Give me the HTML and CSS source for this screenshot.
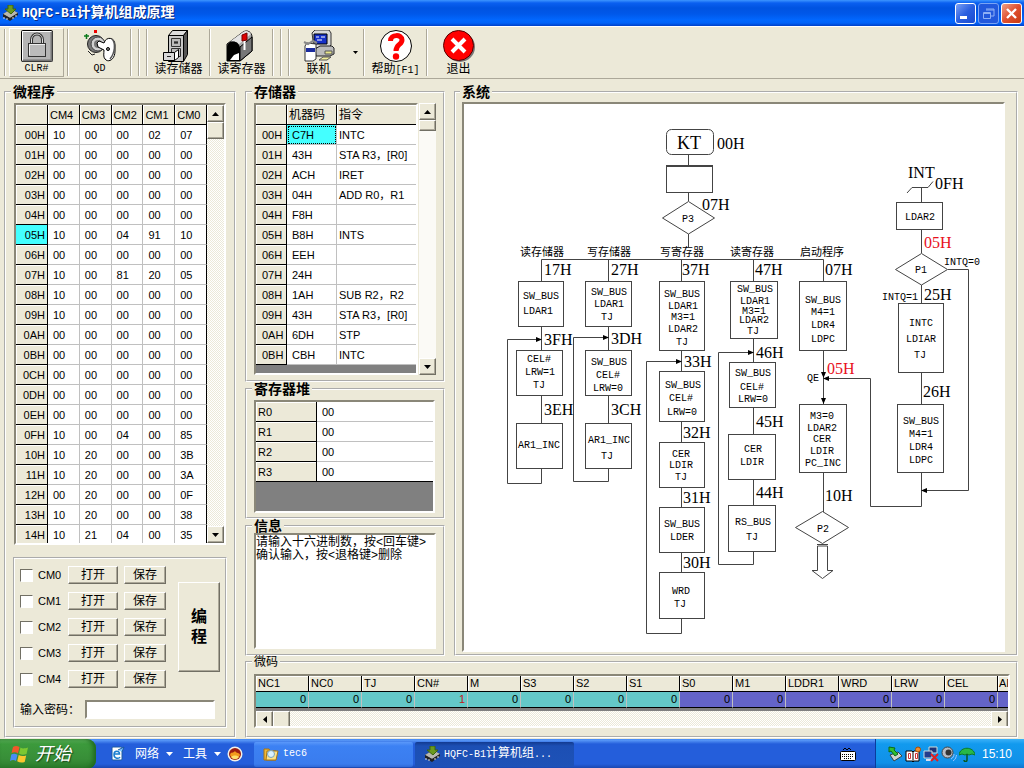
FILE: index.html
```html
<!DOCTYPE html>
<html lang="zh-CN">
<head>
    <meta charset="UTF-8">
    <meta name="viewport" content="width=device-width, initial-scale=1.0">
    <title>HQFC-B1计算机组成原理</title>
    <link rel="stylesheet" href="styles.css">
</head>
<body>
    <svg class="sprite" width="0" height="0">
        <symbol id="chip" viewBox="0 0 16 16">
            <path d="M1 9l8-5 7 4-8 6z" fill="#333"/>
            <path d="M1 9l8-5 7 4-8 5z" fill="#b8b8b0"/>
            <path d="M1 9v3l7 4 8-6V8l-8 5z" fill="#222"/>
            <path d="M2 12v2M5 13v2M11 12v2M14 10v2" stroke="#ddd"/>
            <path d="M6 0h5v4h3l-5 5-6-5h3z" fill="#6b9a1e" stroke="#3d6410"/>
        </symbol>
    </svg>

    <header class="titlebar">
        <svg class="app-icon" width="16" height="16"><use href="#chip"/></svg>
        <h1><span class="latin">HQFC-B1</span>计算机组成原理</h1>
        <div class="window-buttons">
            <button type="button" class="win-btn" aria-label="最小化">
                <svg width="19" height="19"><path d="M4 12h7v3H4z" fill="#fff"/></svg>
            </button>
            <button type="button" class="win-btn disabled" aria-label="还原">
                <svg width="19" height="19"><path d="M7 5h8v7h-3M7 6h8M4.5 8.5h7v6h-7zM4 9.5h8" fill="none" stroke="#8fb0f5"/></svg>
            </button>
            <button type="button" class="win-btn close" aria-label="关闭">
                <svg width="19" height="19"><path d="M5 5l9 9M14 5l-9 9" stroke="#fff" stroke-width="2.4"/></svg>
            </button>
        </div>
    </header>

    <div class="toolbar">
        <i class="sep"></i>
        <button type="button" class="tool raised">
            <svg width="32" height="32">
                <rect x=".5" y=".5" width="31" height="31" rx="1" fill="#b5b5b5" stroke="#000"/>
                <path d="M1.5 30V1.5H30" fill="none" stroke="#fff"/>
                <path d="M2 30.5h28.5V2" fill="none" stroke="#777" stroke-width="2"/>
                <path d="M10.5 14V10c0-8 11-8 11 0v4" fill="none" stroke="#333" stroke-width="3"/>
                <path d="M10.5 14V10c0-8 11-8 11 0v4" fill="none" stroke="#ddd"/>
                <rect x="7.5" y="13.5" width="17" height="13" fill="#bbb" stroke="#333"/>
                <path d="M8.5 25V14.5H24" fill="none" stroke="#eee"/>
            </svg>
            <span class="mono">CLR#</span>
        </button>
        <i class="sep"></i>
        <button type="button" class="tool">
            <svg width="32" height="32">
                <path d="M0 6h5M2.5 4v5" stroke="#0a7a1a" stroke-width="1.5"/>
                <path d="M10 0h3v3h-3z" fill="#e00"/>
                <circle cx="12" cy="14" r="8.5" fill="#777" stroke="#222"/>
                <circle cx="14" cy="14" r="7" fill="#d0d0d0" stroke="#444"/>
                <circle cx="14" cy="14" r="4" fill="#777"/>
                <path d="M13 13l2-2 5 2c2-7 11-6 11 2v6c0 9-7 12-10 8-2-2-1-6-1-9l-6-3z" fill="#fff" stroke="#000"/>
                <path d="M28 9c4 4 3 14-2 20" fill="none" stroke="#555" stroke-width="1.5"/>
                <circle cx="24" cy="19" r="1.5" fill="#888" stroke="#000"/>
                <path d="M4 21l4 4 3-1" fill="none" stroke="#222"/>
            </svg>
            <span class="mono">QD</span>
        </button>
        <i class="sep"></i><i class="sep"></i><i class="sep"></i>
        <button type="button" class="tool">
            <svg width="32" height="32">
                <path d="M5.5 5.500l4-5h15l-4 5z" fill="#ddd" stroke="#000"/>
                <path d="M20.5 5.500l4-5v24l-4 7z" fill="#555" stroke="#000"/>
                <path d="M5.5 5.500h15v26h-15z" fill="#c8c8c8" stroke="#000"/>
                <path d="M8.500 8.500h9v8h-9zM8.500 18.500h9v8h-9z" fill="#bbb" stroke="#333"/>
                <path d="M11 12h4M11 13h4" stroke="#000"/>
                <path d="M.5 22.500h11v8h-11z" fill="#d8d8d8" stroke="#000"/>
                <path d="M11.500 22.500l4-3v8l-4 3z" fill="#fff" stroke="#000"/>
                <path d="M4 26h4v1H4z" fill="#222"/>
            </svg>
            <span>读存储器</span>
        </button>
        <i class="sep"></i>
        <button type="button" class="tool">
            <svg width="32" height="32">
                <path d="M1 14L17 2c5-3 9 1 9 5v14L14 31H1z" fill="#aaa" stroke="#000"/>
                <path d="M2 13L17 2c3-2 6-1 8 2L12 15c-2-5-7-5-10-2z" fill="#e4e4e4"/>
                <path d="M1 31V17c0-7 12-8 13 1v13z" fill="#000"/>
                <path d="M4 30l4-5 5-2v7z" fill="#fff"/>
                <path d="M14 31V17L26 7v14z" fill="#777" stroke="#000"/>
                <path d="M18.5 20V4" stroke="#fff" stroke-width="2"/>
                <path d="M16 5l5-2v7l-5 1z" fill="#d00" stroke="#700"/>
            </svg>
            <span>读寄存器</span>
        </button>
        <i class="sep"></i><i class="sep"></i><i class="sep"></i>
        <button type="button" class="tool linked">
            <svg width="32" height="32">
                <path d="M9 3l3-3h14l2 3v12l-3 3H11z" fill="#d8d8d8" stroke="#333"/>
                <path d="M11 4h13v10H11z" fill="#1630c8" stroke="#000"/>
                <path d="M13 7h3M18 7h4M14 10h5" stroke="#fff"/>
                <path d="M12 19l5-3h12l2 2v6l-4 2H13z" fill="#bbb" stroke="#222"/>
                <path d="M22 21h7v3h-7z" fill="#e9e68a" stroke="#555"/>
                <path d="M2 16l2-3 9 1v15l-3 2H2z" fill="#fff" stroke="#333"/>
                <path d="M3 18h9v4H3z" fill="#1b2c9e"/>
                <path d="M1 12l4 2 5-3 4 2" fill="none" stroke="#888" stroke-width="2"/>
                <path d="M16 30l4-3h8l-4 3z" fill="#f3ef9a" stroke="#555"/>
            </svg>
            <span>联机</span>
        </button>
        <button type="button" class="drop" aria-label="联机选项"><svg width="5" height="3"><path d="M0 0h5L2.5 3z"/></svg></button>
        <i class="sep"></i>
        <button type="button" class="tool">
            <svg width="32" height="32">
                <circle cx="16" cy="16" r="15.5" fill="#fff" stroke="#000"/>
                <path d="M10.5 11c0-7 11.5-7 11.5-1 0 5-6 4-6 11" fill="none" stroke="#f00" stroke-width="5"/>
                <circle cx="16" cy="26.5" r="3.2" fill="#f00"/>
            </svg>
            <span>帮助<span class="mono">[F1]</span></span>
        </button>
        <i class="sep"></i>
        <button type="button" class="tool">
            <svg width="32" height="32">
                <circle cx="17" cy="17" r="15" fill="#777"/>
                <circle cx="15.5" cy="15.5" r="15" fill="#f00" stroke="#500"/>
                <path d="M9 9l13 13M22 9L9 22" stroke="#fff" stroke-width="4"/>
            </svg>
            <span>退出</span>
        </button>
    </div>

    <main>
        <fieldset class="micro">
            <legend>微程序</legend>
            <div class="grid micro-grid">
                <table class="cells">
                    <thead>
                        <tr><th></th><th>CM4</th><th>CM3</th><th>CM2</th><th>CM1</th><th>CM0</th></tr>
                    </thead>
                    <tbody>
                        <tr><th>00H</th><td>10</td><td>00</td><td>00</td><td>02</td><td>07</td></tr>
                        <tr><th>01H</th><td>00</td><td>00</td><td>00</td><td>00</td><td>00</td></tr>
                        <tr><th>02H</th><td>00</td><td>00</td><td>00</td><td>00</td><td>00</td></tr>
                        <tr><th>03H</th><td>00</td><td>00</td><td>00</td><td>00</td><td>00</td></tr>
                        <tr><th>04H</th><td>00</td><td>00</td><td>00</td><td>00</td><td>00</td></tr>
                        <tr><th class="current">05H</th><td>10</td><td>00</td><td>04</td><td>91</td><td>10</td></tr>
                        <tr><th>06H</th><td>00</td><td>00</td><td>00</td><td>00</td><td>00</td></tr>
                        <tr><th>07H</th><td>10</td><td>00</td><td>81</td><td>20</td><td>05</td></tr>
                        <tr><th>08H</th><td>10</td><td>00</td><td>00</td><td>00</td><td>00</td></tr>
                        <tr><th>09H</th><td>10</td><td>00</td><td>00</td><td>00</td><td>00</td></tr>
                        <tr><th>0AH</th><td>00</td><td>00</td><td>00</td><td>00</td><td>00</td></tr>
                        <tr><th>0BH</th><td>00</td><td>00</td><td>00</td><td>00</td><td>00</td></tr>
                        <tr><th>0CH</th><td>00</td><td>00</td><td>00</td><td>00</td><td>00</td></tr>
                        <tr><th>0DH</th><td>00</td><td>00</td><td>00</td><td>00</td><td>00</td></tr>
                        <tr><th>0EH</th><td>00</td><td>00</td><td>00</td><td>00</td><td>00</td></tr>
                        <tr><th>0FH</th><td>10</td><td>00</td><td>04</td><td>00</td><td>85</td></tr>
                        <tr><th>10H</th><td>10</td><td>20</td><td>00</td><td>00</td><td>3B</td></tr>
                        <tr><th>11H</th><td>10</td><td>20</td><td>00</td><td>00</td><td>3A</td></tr>
                        <tr><th>12H</th><td>00</td><td>20</td><td>00</td><td>00</td><td>0F</td></tr>
                        <tr><th>13H</th><td>10</td><td>20</td><td>00</td><td>00</td><td>38</td></tr>
                        <tr><th>14H</th><td>10</td><td>21</td><td>04</td><td>00</td><td>35</td></tr>
                    </tbody>
                </table>
                <div class="scrollbar">
                    <button type="button" aria-label="向上"><svg width="7" height="4"><path d="M3.5 0L7 4H0z"/></svg></button>
                    <div class="thumb"></div>
                    <button type="button" class="end" aria-label="向下"><svg width="7" height="4"><path d="M0 0h7L3.5 4z"/></svg></button>
                </div>
            </div>

            <div class="program-box">
                <div class="program-row">
                    <div class="files">
                        <div class="file-row"><label><input type="checkbox">CM0</label><button type="button" class="btn open">打开</button><button type="button" class="btn">保存</button></div>
                        <div class="file-row"><label><input type="checkbox">CM1</label><button type="button" class="btn open">打开</button><button type="button" class="btn">保存</button></div>
                        <div class="file-row"><label><input type="checkbox">CM2</label><button type="button" class="btn open">打开</button><button type="button" class="btn">保存</button></div>
                        <div class="file-row"><label><input type="checkbox">CM3</label><button type="button" class="btn open">打开</button><button type="button" class="btn">保存</button></div>
                        <div class="file-row"><label><input type="checkbox">CM4</label><button type="button" class="btn open">打开</button><button type="button" class="btn">保存</button></div>
                    </div>
                    <button type="button" class="btn program">编<br>程</button>
                </div>
                <div class="password-row">
                    <label for="password">输入密码：</label>
                    <input type="password" id="password">
                </div>
            </div>
        </fieldset>

        <div class="right">
            <div class="upper">
                <div class="middle">
                    <fieldset class="memory">
                        <legend>存储器</legend>
                        <div class="memory-body">
                            <div class="grid memory-grid">
                                <table class="cells">
                                    <thead>
                                        <tr><th></th><th>机器码</th><th>指令</th></tr>
                                    </thead>
                                    <tbody>
                                        <tr><th>00H</th><td class="selected">C7H</td><td>INTC</td></tr>
                                        <tr><th>01H</th><td>43H</td><td>STA R3，[R0]</td></tr>
                                        <tr><th>02H</th><td>ACH</td><td>IRET</td></tr>
                                        <tr><th>03H</th><td>04H</td><td>ADD R0，R1</td></tr>
                                        <tr><th>04H</th><td>F8H</td><td></td></tr>
                                        <tr><th>05H</th><td>B8H</td><td>INTS</td></tr>
                                        <tr><th>06H</th><td>EEH</td><td></td></tr>
                                        <tr><th>07H</th><td>24H</td><td></td></tr>
                                        <tr><th>08H</th><td>1AH</td><td>SUB R2，R2</td></tr>
                                        <tr><th>09H</th><td>43H</td><td>STA R3，[R0]</td></tr>
                                        <tr><th>0AH</th><td>6DH</td><td>STP</td></tr>
                                        <tr><th>0BH</th><td>CBH</td><td>INTC</td></tr>
                                    </tbody>
                                </table>
                            </div>
                            <div class="scrollbar plain">
                                <button type="button" aria-label="向上"><svg width="7" height="4"><path d="M3.5 0L7 4H0z"/></svg></button>
                                <div class="thumb"></div>
                                <button type="button" class="end" aria-label="向下"><svg width="7" height="4"><path d="M0 0h7L3.5 4z"/></svg></button>
                            </div>
                        </div>
                    </fieldset>

                    <fieldset class="registers">
                        <legend>寄存器堆</legend>
                        <div class="grid register-grid">
                            <table class="cells">
                                <tr><th>R0</th><td>00</td></tr>
                                <tr><th>R1</th><td>00</td></tr>
                                <tr><th>R2</th><td>00</td></tr>
                                <tr><th>R3</th><td>00</td></tr>
                            </table>
                        </div>
                    </fieldset>

                    <fieldset class="info">
                        <legend>信息</legend>
                        <textarea aria-label="信息" readonly>请输入十六进制数，按&lt;回车键&gt;
确认输入，按&lt;退格键&gt;删除</textarea>
                    </fieldset>
                </div>

                <fieldset class="system">
                    <legend>系统</legend>
                    <div class="canvas">
                        <svg class="flow" width="540" height="546" viewBox="464 104 540 546">
                            <!-- boxes -->
                            <g class="box">
                                <rect x="666.5" y="129.5" width="47" height="25" rx="5"/>
                                <rect x="666.5" y="166.5" width="46" height="26"/>
                                <path d="M666 165.5h47"/>
                                <path d="M688.5 201.5l26 16.5-26 16-26-16z"/>
                                <rect x="518.5" y="281.5" width="45" height="45"/>
                                <rect x="516.5" y="350.5" width="46" height="45"/>
                                <rect x="516.5" y="423.5" width="46" height="45"/>
                                <rect x="585.5" y="281.5" width="46" height="45"/>
                                <rect x="585.5" y="350.5" width="46" height="45"/>
                                <rect x="585.5" y="423.5" width="46" height="45"/>
                                <rect x="659.5" y="281.5" width="45" height="69"/>
                                <rect x="659.5" y="371.5" width="45" height="50"/>
                                <rect x="659.5" y="442.5" width="45" height="45"/>
                                <rect x="659.5" y="507.5" width="45" height="45"/>
                                <rect x="659.5" y="572.5" width="45" height="46"/>
                                <rect x="730.5" y="281.5" width="47" height="57"/>
                                <rect x="729.5" y="362.5" width="46" height="45"/>
                                <rect x="728.5" y="434.5" width="47" height="45"/>
                                <rect x="728.5" y="505.5" width="47" height="46"/>
                                <rect x="799.5" y="281.5" width="47" height="69"/>
                                <rect x="799.5" y="404.5" width="47" height="68"/>
                                <path d="M822.5 511.5l26 16-26 16-27-16z"/>
                                <path d="M817.5 546v24.5h-5.5l10.5 8 10.5-8h-5.5V546zM817 544.5h11"/>
                                <rect x="896.5" y="202.5" width="46" height="27"/>
                                <path d="M921.5 253.5l26 16-26 15.5-26-15.5z"/>
                                <rect x="898.5" y="303.5" width="45" height="69"/>
                                <rect x="897.5" y="404.5" width="46" height="68"/>
                            </g>
                            <!-- connecting lines -->
                            <g class="line">
                                <path d="M688.5 154v11M688.5 192v9M688.5 234v13M541.5 281v-21.5h282V281M608.5 259v22M681.5 259v22M753.5 259v22"/>
                                <path d="M541.5 326v24M541.5 395v28M541.5 469v14.5h-34v-144H537"/>
                                <path d="M608.5 326v24M608.5 395v28M608.5 469v12.5h-35v-144H604"/>
                                <path d="M681.5 351v20M681.5 421v21M681.5 487v20M681.5 552v20M681.5 618v15.5h-35v-272H677"/>
                                <path d="M753.5 338v24M753.5 407v27M753.5 479v26M753.5 551v13.5h-35v-212H749"/>
                                <path d="M823.5 351v53M823.5 472v40M828 378.5h42.5v128h51V472"/>
                                <path d="M907 193l5-5.5h16l5-6M921.5 188v14M921.5 229v24M921.5 285v18M921.5 372v32M948 269.5h20.5v221H926"/>
                            </g>
                            <g class="arrow">
                                <path d="M542 339.5l-6-2.5v5zM609 337.5l-6-2.5v5zM682 361.5l-6-2.5v5zM754 352.5l-6-2.5v5z"/>
                                <path d="M823 378.5l6-2.5v5zM921 490.5l6-2.5v5zM823.5 378l-2.5-6h5zM823.5 404l-2.5-6h5z"/>
                            </g>
                            <!-- branch names -->
                            <g class="name">
                                <text x="520" y="256">读存储器</text>
                                <text x="587" y="256">写存储器</text>
                                <text x="660" y="256">写寄存器</text>
                                <text x="730" y="256">读寄存器</text>
                                <text x="800" y="256">启动程序</text>
                            </g>
                            <!-- addresses -->
                            <g class="addr">
                                <text class="kt" x="677" y="149">KT</text>
                                <text x="717" y="149">00H</text>
                                <text x="702" y="210">07H</text>
                                <text x="544" y="275">17H</text>
                                <text x="611" y="275">27H</text>
                                <text x="682" y="275">37H</text>
                                <text x="755" y="275">47H</text>
                                <text x="825" y="275">07H</text>
                                <text x="544" y="345">3FH</text>
                                <text x="544" y="415">3EH</text>
                                <text x="611" y="344">3DH</text>
                                <text x="611" y="415">3CH</text>
                                <text x="684" y="367">33H</text>
                                <text x="683" y="438">32H</text>
                                <text x="683" y="503">31H</text>
                                <text x="683" y="568">30H</text>
                                <text x="756" y="358">46H</text>
                                <text x="756" y="427">45H</text>
                                <text x="756" y="498">44H</text>
                                <text x="825" y="501">10H</text>
                                <text x="908" y="178">INT</text>
                                <text x="935" y="189">0FH</text>
                                <text x="924" y="300">25H</text>
                                <text x="923" y="397">26H</text>
                                <text class="red" x="827" y="374">05H</text>
                                <text class="red" x="924" y="248">05H</text>
                            </g>
                            <!-- micro-operations -->
                            <g class="op">
                                <text x="688" y="222">P3</text>
                                <text x="541" y="299">SW_BUS</text><text x="538" y="314">LDAR1</text>
                                <text x="539" y="362">CEL#</text><text x="540" y="375">LRW=1</text><text x="539" y="388">TJ</text>
                                <text x="539" y="448">AR1_INC</text>
                                <text x="609" y="295">SW_BUS</text><text x="609" y="307">LDAR1</text><text x="607" y="320">TJ</text>
                                <text x="609" y="365">SW_BUS</text><text x="608" y="378">CEL#</text><text x="608" y="391">LRW=0</text>
                                <text x="609" y="443">AR1_INC</text><text x="607" y="459">TJ</text>
                                <text x="682" y="297">SW_BUS</text><text x="683" y="309">LDAR1</text><text x="683" y="320">M3=1</text><text x="683" y="332">LDAR2</text><text x="682" y="345">TJ</text>
                                <text x="683" y="388">SW_BUS</text><text x="681" y="401">CEL#</text><text x="682" y="415">LRW=0</text>
                                <text x="681" y="457">CER</text><text x="681" y="468">LDIR</text><text x="681" y="480">TJ</text>
                                <text x="682" y="527">SW_BUS</text><text x="682" y="540">LDER</text>
                                <text x="681" y="594">WRD</text><text x="680" y="607">TJ</text>
                                <text x="755" y="292">SW_BUS</text><text x="755" y="304">LDAR1</text><text x="754" y="314">M3=1</text><text x="754" y="323">LDAR2</text><text x="753" y="334">TJ</text>
                                <text x="753" y="376">SW_BUS</text><text x="752" y="390">CEL#</text><text x="753" y="402">LRW=0</text>
                                <text x="753" y="452">CER</text><text x="752" y="465">LDIR</text>
                                <text x="753" y="525">RS_BUS</text><text x="752" y="540">TJ</text>
                                <text x="823" y="303">SW_BUS</text><text x="823" y="315">M4=1</text><text x="823" y="328">LDR4</text><text x="823" y="342">LDPC</text>
                                <text x="813" y="381">QE</text>
                                <text x="822" y="419">M3=0</text><text x="822" y="431">LDAR2</text><text x="822" y="442">CER</text><text x="822" y="454">LDIR</text><text x="823" y="466">PC_INC</text>
                                <text x="823" y="532">P2</text>
                                <text x="920" y="220">LDAR2</text>
                                <text x="921" y="273">P1</text><text x="962" y="265">INTQ=0</text><text x="900" y="300">INTQ=1</text>
                                <text x="921" y="326">INTC</text><text x="921" y="342">LDIAR</text><text x="920" y="358">TJ</text>
                                <text x="921" y="424">SW_BUS</text><text x="921" y="437">M4=1</text><text x="921" y="450">LDR4</text><text x="921" y="463">LDPC</text>
                            </g>
                        </svg>
                    </div>
                </fieldset>
            </div>

            <fieldset class="code">
                <legend>微码</legend>
                <div class="grid code-grid">
                    <table class="cells">
                        <thead>
                            <tr><th>NC1</th><th>NC0</th><th>TJ</th><th>CN#</th><th>M</th><th>S3</th><th>S2</th><th>S1</th><th>S0</th><th>M1</th><th>LDDR1</th><th>WRD</th><th>LRW</th><th>CEL</th><th>AI</th></tr>
                        </thead>
                        <tbody>
                            <tr><td>0</td><td>0</td><td>0</td><td class="on">1</td><td>0</td><td>0</td><td>0</td><td>0</td><td class="hi">0</td><td class="hi">0</td><td class="hi">0</td><td class="hi">0</td><td class="hi">0</td><td class="hi">0</td><td class="hi"></td></tr>
                        </tbody>
                    </table>
                    <div class="scrollbar across">
                        <button type="button" aria-label="向左"><svg width="4" height="7"><path d="M4 0v7L0 3.5z"/></svg></button>
                        <div class="thumb"></div>
                        <button type="button" class="end" aria-label="向右"><svg width="4" height="7"><path d="M0 0v7l4-3.5z"/></svg></button>
                    </div>
                </div>
            </fieldset>
        </div>
    </main>

    <footer class="taskbar">
        <button type="button" class="start">
            <svg width="20" height="20" viewBox="0 0 20 20">
                <path d="M3 3c2-1.5 4-1.5 6.5 0L8 9.5C6 8 4 8 1.5 9z" fill="#f0582a"/>
                <path d="M10.5 3.5c2 1.5 4 1 7.5 0L16.5 10c-3 1-5 1-7.5-.5z" fill="#7cc832"/>
                <path d="M1.3 10.5c2-1.2 4-1 6.2.2L6 17c-2-1.5-4-1.2-6 0z" fill="#4a8cf5"/>
                <path d="M8.7 11c2.5 1.5 5 1.2 7.5.5L14.7 18c-3 1-5 .7-7.500-.8z" fill="#fbc72e"/>
            </svg>
            <span>开始</span>
        </button>
        <nav class="quick">
            <svg width="16" height="16">
                <rect x="3" y="1" width="10" height="13" rx="1" fill="#fff" stroke="#1c5aa0"/>
                <path d="M11 11c-1 2-6 2-6-2.500S10.500 4.500 10.500 8H5" fill="none" stroke="#1a7ed0" stroke-width="1.500"/>
                <path d="M9 4l6-3-2 5" fill="#7fc6ff" stroke="#1c5aa0"/>
            </svg>
            <button type="button" class="menu">网络<svg width="7" height="4"><path d="M0 0h7L3.5 4z" fill="#fff"/></svg></button>
            <button type="button" class="menu">工具<svg width="7" height="4"><path d="M0 0h7L3.5 4z" fill="#fff"/></svg></button>
            <svg class="flame" width="16" height="16">
                <circle cx="8" cy="8" r="7.5" fill="#f2f2ea"/>
                <circle cx="8" cy="8" r="6" fill="#9c1c10"/>
                <path d="M3 9c1-4 3-1 5-4 2 3 4 1 5 4-1 4-9 4-10 0z" fill="#f39a1c"/>
                <path d="M4 11c2-2 6-2 8 0-2 3-6 3-8 0z" fill="#ffe06a"/>
            </svg>
        </nav>
        <div class="tasks">
            <button type="button" class="task">
                <svg width="16" height="16">
                    <path d="M1 3h5l1 2h6v9H1z" fill="#f0b93a" stroke="#a87412"/>
                    <path d="M4 5h11l-2 9H3z" fill="#fbe28a" stroke="#a87412"/>
                    <circle cx="8" cy="8" r="3.5" fill="#d8f0ff" stroke="#7aa2b8"/>
                </svg>
                <span class="mono">tec6</span>
            </button>
            <button type="button" class="task active">
                <svg width="16" height="16"><use href="#chip"/></svg>
                <span><span class="mono">HQFC-B1</span>计算机组<span class="mono">...</span></span>
            </button>
        </div>
        <svg class="keyboard" width="16" height="14">
            <path d="M3 3l2-2 2 2 2-2 2 2" fill="none" stroke="#000"/>
            <rect x=".5" y="4.5" width="15" height="9" rx="1" fill="#fff" stroke="#000"/>
            <path d="M2 7.5h12M2 9.5h12M4 11.5h8" stroke="#000" stroke-dasharray="1 1"/>
        </svg>
        <div class="tray">
            <svg width="16" height="16">
                <path d="M3 9l8-3 4 4-8 5z" fill="#cfd4d0" stroke="#344"/>
                <path d="M2 1l6 1-1 2 4 4-3 2-4-5-2 1z" fill="#2fbf30" stroke="#0c6a14"/>
            </svg>
            <svg width="16" height="16">
                <path d="M1 5h6l1 1 1-1h5v10H9l-1 1-1-1H1z" fill="#fff" stroke="#000"/>
                <path d="M8 6v9" stroke="#000"/>
                <path d="M3.500 7.500v5h2v-5zM10.500 7.500v5h2v-5z" fill="#fff" stroke="#c33"/>
                <circle cx="13" cy="3.5" r="2.500" fill="#f09030" stroke="#a84a00"/>
            </svg>
            <svg width="16" height="16">
                <path d="M6 1h8v6H6z" fill="#1c3278" stroke="#cdd"/>
                <path d="M1 5h8v7H1z" fill="#243c8c" stroke="#cdd"/>
                <path d="M3 14h6" stroke="#dde" stroke-width="2"/>
                <path d="M8 8l7 7M15 8l-7 7" stroke="#e02020" stroke-width="2"/>
            </svg>
            <svg width="16" height="16">
                <circle cx="6.5" cy="6.5" r="5.5" fill="#b8bcc4" stroke="#444"/>
                <circle cx="7.5" cy="6.5" r="3" fill="#333"/>
                <path d="M10 13c2-1 3-3 3-5M12 15c3-2 3-4 3.5-6" fill="none" stroke="#9fc4ff"/>
            </svg>
            <svg width="16" height="16">
                <path d="M0 9C1 0 15 0 16 9l-3-1-3 1-2-1-2 1-3-1z" fill="#28b848" stroke="#0b7a28"/>
                <path d="M8 8v6c0 2-3 2-3 0" fill="none" stroke="#0a5a20" stroke-width="1.5"/>
            </svg>
            <span class="clock">15:10</span>
        </div>
    </footer>
</body>
</html>
```
FILE: styles.css
```css
* {
    margin: 0;
    padding: 0;
    box-sizing: border-box;
}
body {
    min-height: 100vh;
    display: flex;
    flex-direction: column;
    background-color: #ece9d8;
    color: #000;
    font-family: "Liberation Sans", "Noto Sans CJK SC", sans-serif;
    font-size: 12px;
    line-height: 14px;
}
button, input, textarea {
    font: inherit;
    color: inherit;
}
button {
    background: none;
    border: none;
}
svg {
    display: block;
    flex: none;
}
.sprite {
    position: absolute;
}
.mono {
    font-family: "Liberation Mono", monospace;
    font-size: 10px;
}

/* title bar */
.titlebar {
    height: 26px;
    display: flex;
    align-items: center;
    padding: 0 2px;
    background: linear-gradient(#3d95ff 0, #0a5ff0 3px, #0053e1 8px, #0058ea 14px, #0167ff 20px, #0163f8 23px, #0040c8 26px);
}
.titlebar h1 {
    margin-left: 4px;
    color: #fff;
    font-size: 14px;
    line-height: 20px;
    text-shadow: 1px 1px 0 #0a2a80;
}
.latin {
    font-family: "Liberation Mono", monospace;
    font-size: 13px;
}
.window-buttons {
    margin-left: auto;
    display: flex;
    gap: 2px;
}
.win-btn {
    width: 21px;
    height: 21px;
    border: 1px solid #fff;
    border-radius: 3px;
    background: linear-gradient(135deg, #7ba0f5, #2a5fe0 50%, #1a4bd0);
}
.win-btn.disabled {
    border-color: #7aa4f4;
    background: #2258dc;
}
.win-btn.close {
    background: linear-gradient(135deg, #f0a088, #df5030 50%, #c83a10);
}

/* toolbar */
.toolbar {
    height: 53px;
    display: flex;
    align-items: stretch;
    padding: 1px 0 1px 4px;
    border-top: 1px solid #fff;
    border-bottom: 1px solid #aca899;
}
.sep {
    width: 2px;
    margin: 1px 0;
    border-left: 1px solid #aca899;
    border-right: 1px solid #fff;
}
.sep + .sep {
    margin-left: 6px;
}
.tool {
    width: 61px;
    display: flex;
    flex-direction: column;
    align-items: center;
    padding-top: 2px;
    white-space: nowrap;
}
.tool.raised {
    width: 55px;
    margin: 0 3px;
    padding-top: 1px;
    border: 1px solid;
    border-color: #fff #aca899 #aca899 #fff;
}
.tool.linked {
    width: 57px;
}
.drop {
    width: 16px;
    display: flex;
    align-items: center;
    justify-content: center;
}

/* group boxes */
main {
    flex: 1;
    display: flex;
    gap: 9px;
    padding: 6px 6px 1px 4px;
}
fieldset {
    min-width: 0;
    border: 2px groove #fff;
    padding: 4px 7px 5px;
}
legend {
    margin-left: -2px;
    padding: 0 2px;
    font-size: 14px;
    font-weight: bold;
    line-height: 14px;
}
.right {
    flex: 1;
    min-width: 0;
    display: flex;
    flex-direction: column;
}
.upper {
    flex: 1;
    display: flex;
    gap: 9px;
}
.middle {
    width: 200px;
    display: flex;
    flex-direction: column;
}

/* grids */
.grid {
    border: 2px solid;
    border-color: #8a8778 #fff #fff #8a8778;
    background-color: #808080;
    overflow: hidden;
}
.cells {
    border-collapse: separate;
    border-spacing: 0;
    table-layout: fixed;
    font-size: 11px;
}
.cells th, .cells td {
    height: 20px;
    line-height: 16px;
    text-align: left;
    font-weight: normal;
    white-space: nowrap;
    border-right: 1px solid #c0c0c0;
    border-bottom: 1px solid #c0c0c0;
}
.cells th {
    background-color: #ece9d8;
    border-color: #000;
    box-shadow: inset 1px 1px 0 #fff;
    padding-left: 2px;
}
.cells td {
    background-color: #fff;
    padding-left: 5px;
}
.cells td:last-child {
    border-right-color: #000;
}
.micro {
    width: 232px;
}
.micro-grid {
    height: 442px;
    display: flex;
    justify-content: space-between;
    margin: 0 1px;
}
.micro-grid .cells {
    width: 192px;
}
.micro-grid th:first-child {
    width: 32px;
}
.micro-grid tbody th {
    text-align: right;
    padding-right: 2px;
}
.cells th.current, .cells td.selected {
    background-color: #4ff;
    box-shadow: none;
}
.cells td.selected {
    outline: 1px dotted #000;
    outline-offset: -2px;
}

/* scroll bars */
.scrollbar {
    width: 17px;
    display: flex;
    flex-direction: column;
    background: repeating-conic-gradient(#fff 0 25%, #ece9d8 0 50%) 0 0 / 2px 2px;
}
.scrollbar button, .scrollbar .thumb, .btn {
    border: 1px solid;
    border-color: #fff #716f64 #716f64 #fff;
    box-shadow: inset -1px -1px 0 #aca899;
    background-color: #ece9d8;
}
.scrollbar button, .scrollbar .thumb {
    flex: none;
    width: 17px;
    height: 17px;
    display: flex;
    align-items: center;
    justify-content: center;
}
.scrollbar .end {
    margin-top: auto;
}
.scrollbar.plain {
    background: #fbfaf6;
}
.scrollbar.plain .thumb {
    height: 11px;
}
.scrollbar.across {
    width: auto;
    flex-direction: row;
}
.scrollbar.across .end {
    margin: 0 0 0 auto;
}

/* load, save and program */
.program-box {
    margin-top: 12px;
    height: 171px;
    border: 2px groove #fff;
    padding: 3px 5px;
}
.program-row {
    display: flex;
    align-items: center;
    justify-content: space-between;
}
.file-row {
    height: 26px;
    display: flex;
    align-items: center;
}
.file-row label {
    width: 48px;
    display: flex;
    align-items: center;
    gap: 5px;
    font-size: 11px;
}
.file-row input {
    appearance: none;
    width: 13px;
    height: 13px;
    background-color: #fff;
    border: 1px solid;
    border-color: #716f64 #fff #fff #716f64;
}
.btn {
    width: 42px;
    height: 18px;
    line-height: 14px;
}
.btn.open {
    width: 50px;
    margin-right: 6px;
}
.btn.program {
    height: 90px;
    font-size: 16px;
    font-weight: bold;
    line-height: 20px;
}
.password-row {
    display: flex;
    align-items: center;
    margin-top: 8px;
}
.password-row label {
    width: 65px;
    white-space: nowrap;
}
.password-row input {
    width: 130px;
    height: 19px;
    background-color: #fff;
    border: 2px solid;
    border-color: #8a8778 #fff #fff #8a8778;
}

/* memory */
.memory-body {
    display: flex;
    gap: 1px;
}
.memory-grid {
    width: 167px;
    height: 272px;
}
.memory-grid .cells {
    width: 161px;
}
.memory-grid th:first-child {
    width: 31px;
    padding-left: 6px;
}
.memory-grid th:nth-child(2) {
    width: 50px;
}
.memory-grid thead th {
    font-size: 12px;
}
.memory-grid td:last-child {
    padding-left: 2px;
}

/* registers */
.registers {
    padding-bottom: 4px;
}
.register-grid {
    height: 113px;
    margin-right: 1px;
}
.register-grid .cells {
    width: 100%;
}
.register-grid th {
    width: 61px;
}
.register-grid td:last-child {
    border-right: none;
}
.register-grid tr:last-child td {
    border-bottom-color: #000;
}

/* information */
.info {
    flex: 1;
    display: flex;
    padding-top: 0;
}
.info textarea {
    flex: 1;
    min-width: 0;
    height: 116px;
    padding-top: 1px;
    resize: none;
    background-color: #fff;
    border: 2px solid;
    border-color: #8a8778 #fff #fff #8a8778;
    line-height: 13px;
    white-space: pre;
    overflow: hidden;
}

/* flow chart */
.system {
    flex: 1;
    display: flex;
    padding: 3px 11px 2px 6px;
}
.canvas {
    flex: 1;
    min-width: 0;
    background-color: #fff;
    border: 2px solid;
    border-color: #8a8778 #fff #fff #8a8778;
    overflow: hidden;
}
.flow .box {
    fill: #fff;
    stroke: #444;
}
.flow .line {
    fill: none;
    stroke: #444;
}
.flow .name {
    font-family: "Noto Sans CJK SC", sans-serif;
    font-size: 11px;
}
.flow .addr {
    font-family: "Liberation Serif", serif;
    font-size: 16px;
}
.flow .kt {
    font-size: 18px;
}
.flow .red {
    fill: #e8101c;
}
.flow .op {
    font-family: "Liberation Mono", monospace;
    font-size: 10px;
    text-anchor: middle;
}

/* microcode */
.code {
    padding: 6px 6px 8px 7px;
}
.code legend {
    font-size: 12px;
    font-weight: normal;
    line-height: 12px;
}
.code-grid {
    height: 54px;
}
.code-grid .cells {
    width: 100%;
    margin-bottom: 3px;
}
.code-grid th, .code-grid td {
    width: 53px;
    height: 16px;
    line-height: 15px;
}
.code-grid td {
    background-color: #64c8c8;
    border-bottom-color: #000;
    text-align: right;
    padding-right: 2px;
}
.code-grid th:last-child, .code-grid td:last-child {
    width: auto;
    padding: 0 0 0 1px;
    border-right: none;
}
.code-grid .hi {
    background-color: #6464c8;
}
.code-grid .on {
    color: #c01818;
}

/* task bar */
.taskbar {
    height: 30px;
    display: flex;
    align-items: center;
    color: #fff;
    background: linear-gradient(#3a80f0 0, #5a9af8 1px, #245edb 5px, #245edb 25px, #1941a5 30px);
}
.start {
    width: 96px;
    height: 30px;
    display: flex;
    align-items: center;
    gap: 5px;
    padding-left: 10px;
    border-radius: 0 9px 9px 0;
    background: linear-gradient(#5fb45f 0, #3c9a3c 5px, #388e38 20px, #2a7a2a 30px);
    box-shadow: inset -3px 0 4px #1f6a1f;
    font-size: 18px;
    font-style: italic;
    line-height: 22px;
    text-shadow: 1px 1px 1px #1a4a1a;
}
.quick {
    width: 158px;
    display: flex;
    align-items: center;
    gap: 10px;
    padding-left: 13px;
}
.quick .flame {
    margin-left: -4px;
}
.menu {
    display: flex;
    align-items: center;
    gap: 7px;
}
.tasks {
    flex: 1;
    display: flex;
    gap: 2px;
}
.task {
    width: 159px;
    height: 25px;
    display: flex;
    align-items: center;
    gap: 4px;
    padding-left: 9px;
    border-radius: 2px;
    background: linear-gradient(#5a98fa 0, #3c81f3 4px, #3a7cee 22px, #2f68d6 25px);
}
.task.active {
    background: linear-gradient(#123a90 0, #1c4fb4 4px, #1e52b7 25px);
}
.keyboard {
    margin-right: 19px;
}
.tray {
    width: 149px;
    height: 30px;
    display: flex;
    align-items: center;
    gap: 2px;
    padding-left: 11px;
    border-left: 1px solid #0a3c9c;
    background: linear-gradient(#3ab0f8 0, #129aee 5px, #1090e8 24px, #0f70c8 30px);
}
.clock {
    margin-left: 5px;
}
```
